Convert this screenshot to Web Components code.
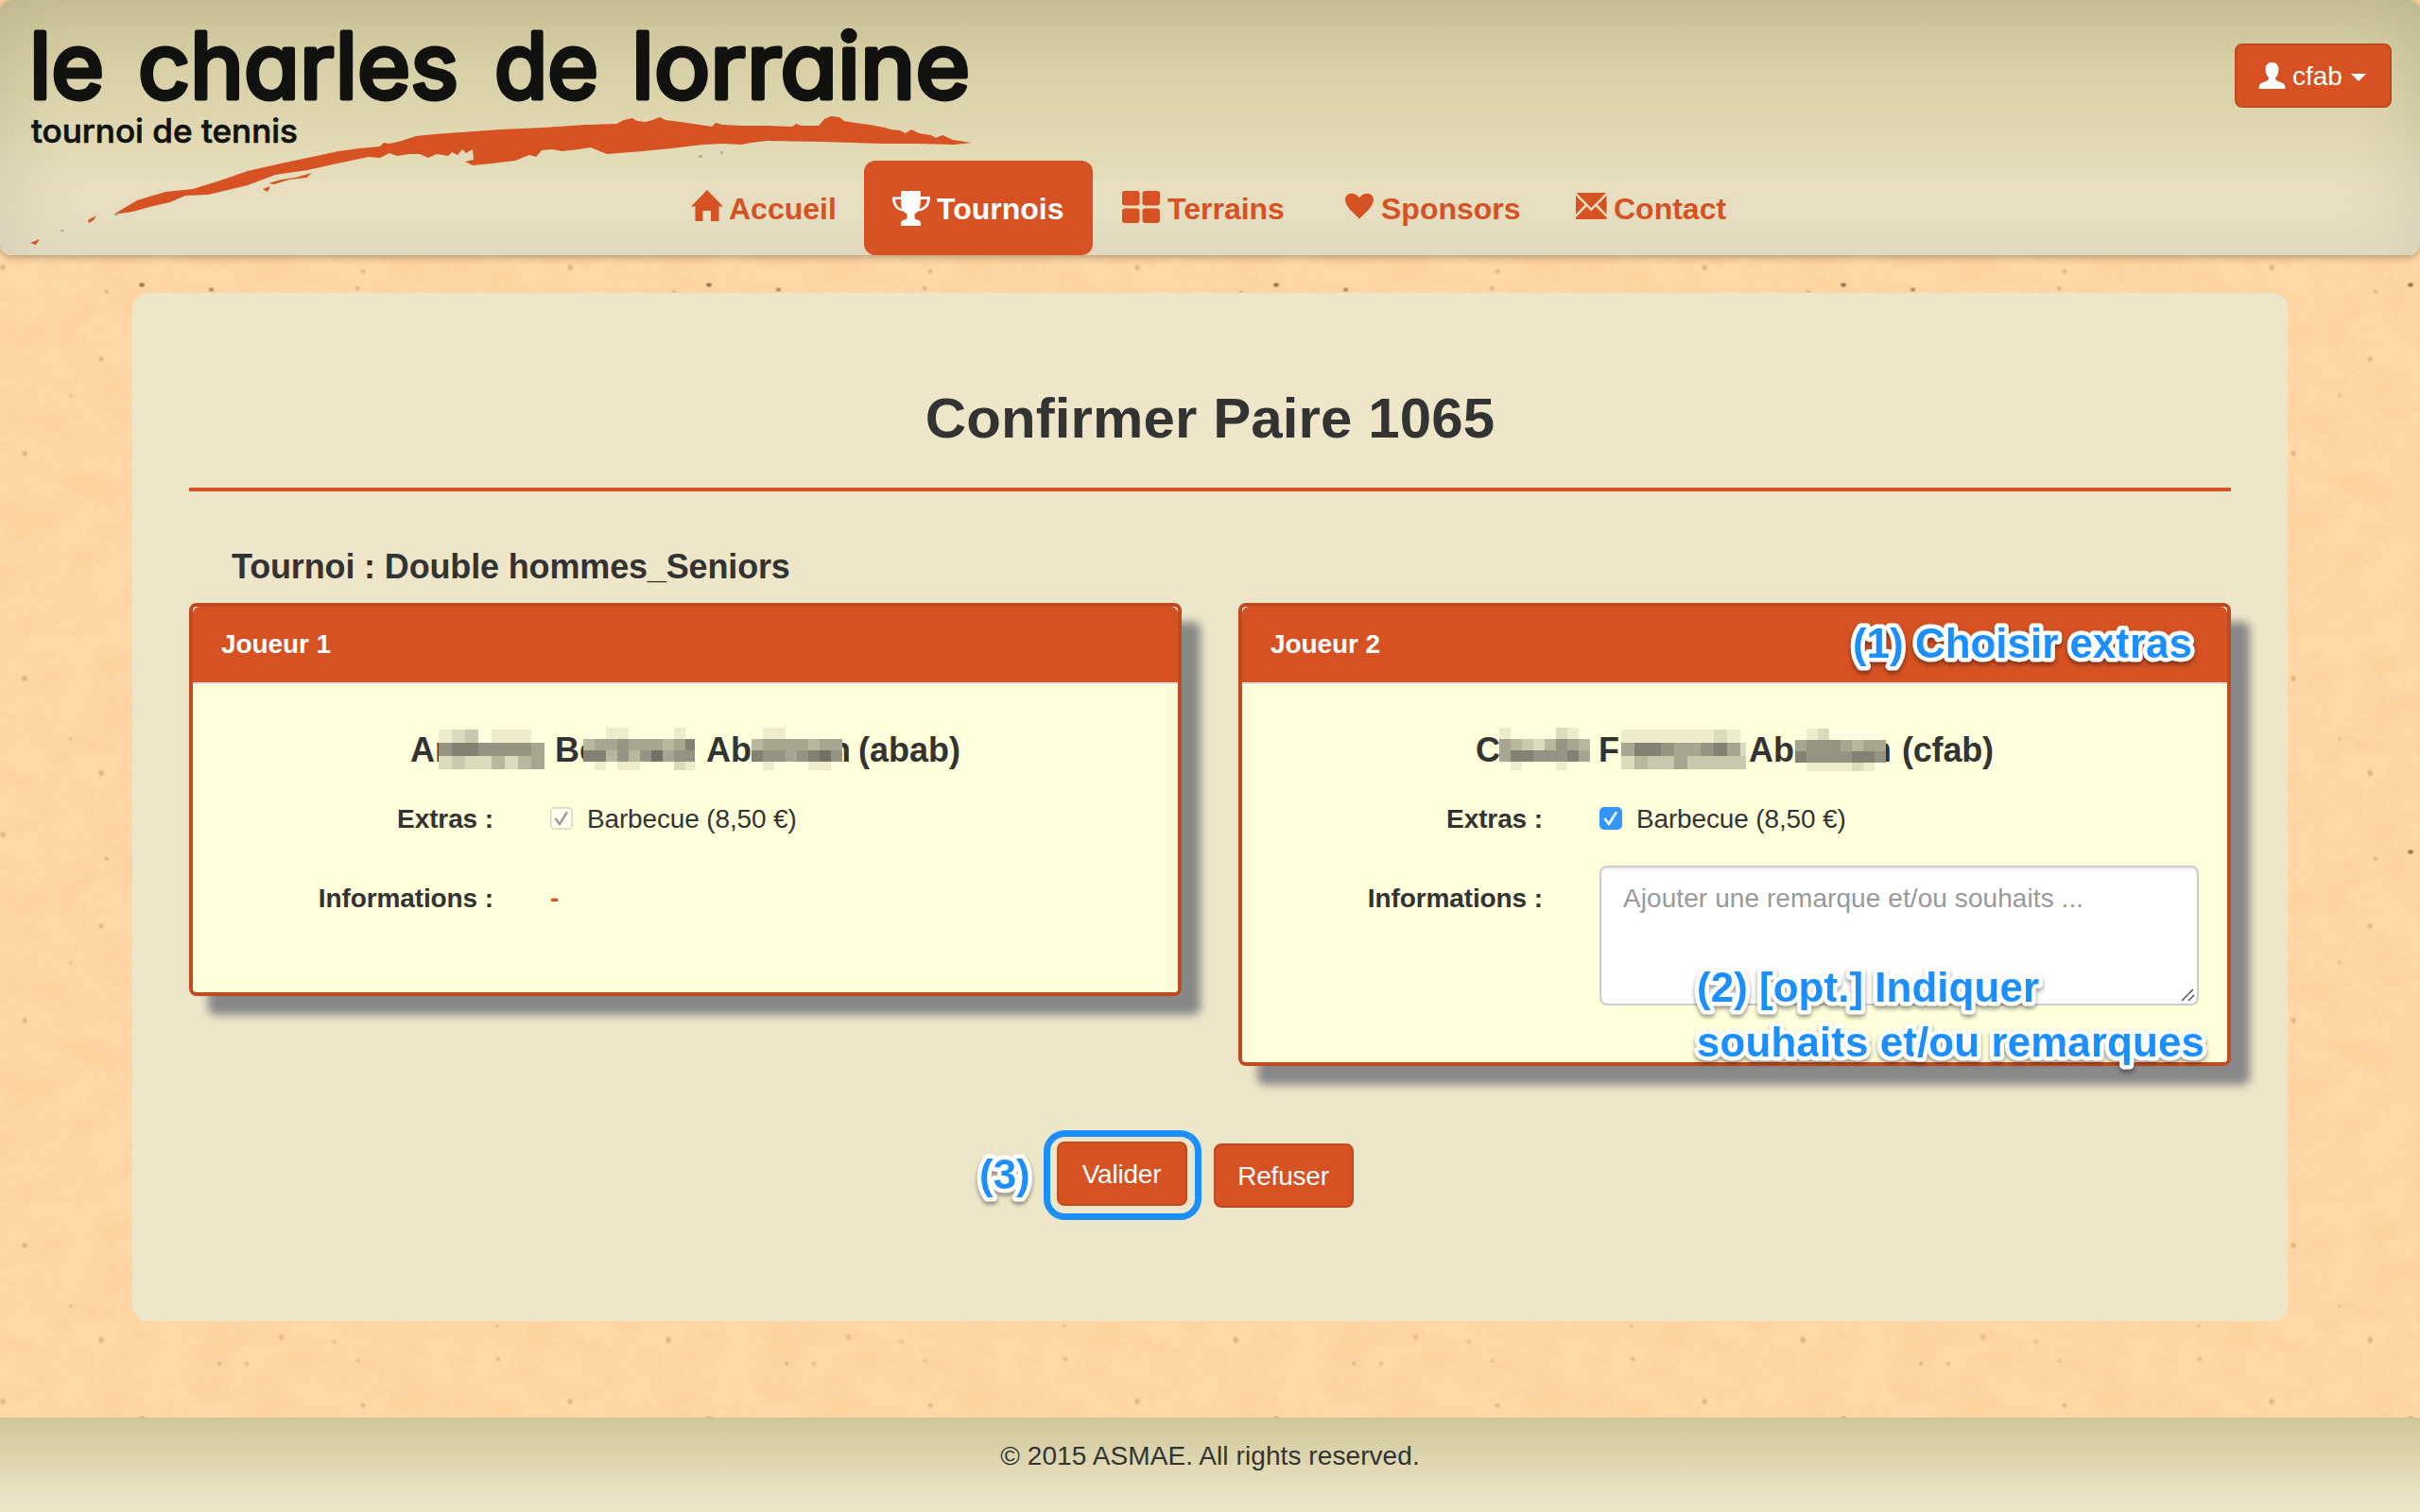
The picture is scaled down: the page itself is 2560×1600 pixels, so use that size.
<!DOCTYPE html>
<html lang="fr">
<head>
<meta charset="utf-8">
<title>Le Charles de Lorraine</title>
<style>
html,body{margin:0;padding:0}
body{width:2560px;height:1600px;overflow:hidden;background:#ffd7a4;color:#333;font:28px/40px "Liberation Sans",Arial,sans-serif}
</style>
</head>
<body>
<page-shell>
  <site-header slot="header"></site-header>
  <content-panel slot="main" heading="Confirmer Paire 1065" subheading="Tournoi : Double hommes_Seniors">
    <player-card slot="cards" label="Joueur 1" style="--body:326px">
      <player-name slot="name" style="padding-left:230px">
        <name-part style="width:30px">An</name-part>
        <pixel-mask cell="14" top="4" rows="12301110,67766665,23224245"></pixel-mask>
        <name-part style="width:30px;margin-left:11px">Be</name-part>
        <pixel-mask cell="12" top="2" rows="0011000010,4556555457,7746468566,0101100021" last="10"></pixel-mask>
        <name-part style="width:48px;margin-left:12px">Ab</name-part>
        <pixel-mask cell="12" top="2" rows="01100000,45555455,76656786,01000110"></pixel-mask>
        <name-part tail style="width:9px">n</name-part>
        <name-part style="margin-left:8px">(abab)</name-part>
      </player-name>
      <check-option slot="extras" disabled>Barbecue (8,50 €)</check-option>
      <b slot="info" style="color:#d65223;display:block;padding-top:15px">-</b>
    </player-card>
    <player-card slot="cards" label="Joueur 2" style="--body:400px">
      <player-name slot="name" style="padding-left:247px">
        <name-part style="width:25px">C</name-part>
        <pixel-mask cell="12" top="2" rows="10000210,54324654,57766675,01000100"></pixel-mask>
        <name-part style="width:24px;margin-left:9px">F</name-part>
        <pixel-mask cell="14" top="4" rows="1111111210,5776556752,2433533333" last="6"></pixel-mask>
        <name-part style="width:49px;margin-left:3px">Abe</name-part>
        <pixel-mask cell="12" top="3" rows="01200000,56665455,76666776,01111210"></pixel-mask>
        <name-part tail style="width:6px">n</name-part>
        <name-part style="margin-left:11px;letter-spacing:-.2px">(cfab)</name-part>
      </player-name>
      <check-option slot="extras">Barbecue (8,50 €)</check-option>
      <note-field slot="info">Ajouter une remarque et/ou souhaits ...</note-field>
    </player-card>
    <action-button slot="actions" style="width:138px">Valider</action-button>
    <action-button slot="actions" style="width:148px;margin-top:2px">Refuser</action-button>
  </content-panel>
  <site-footer slot="footer">© 2015 ASMAE. All rights reserved.</site-footer>
  <guide-notes slot="notes"></guide-notes>
</page-shell>

<script>
const define = (name, html, setup) => {
  const tpl = document.createElement('template');
  tpl.innerHTML = html;
  customElements.define(name, class extends HTMLElement {
    constructor() {
      super();
      this.attachShadow({mode: 'open'}).append(tpl.content.cloneNode(true));
    }
    connectedCallback() { if (setup) setup(this, this.shadowRoot); }
  });
};

/* Speckled paper background: one 600px tile, repeated. */
define('paper-texture', `
<style>:host{display:block;width:2560px;height:1600px}svg{display:block}</style>
<svg width="2560" height="1600">
  <defs>
    <filter id="grain" x="0" y="0" width="600" height="600" filterUnits="userSpaceOnUse" color-interpolation-filters="sRGB">
      <feTurbulence type="fractalNoise" baseFrequency="0.02 0.03" numOctaves="5" seed="4" stitchTiles="stitch"/>
      <feColorMatrix values="0 0 0 0 .95  0 0 0 0 .68  0 0 0 0 .44  .9 .5 0 0 -.5"/>
    </filter>
    <filter id="light" x="0" y="0" width="600" height="600" filterUnits="userSpaceOnUse" color-interpolation-filters="sRGB">
      <feTurbulence type="fractalNoise" baseFrequency="0.12 0.16" numOctaves="3" seed="9" stitchTiles="stitch"/>
      <feColorMatrix values="0 0 0 0 1  0 0 0 0 .9  0 0 0 0 .7  1.6 0 0 0 -.62"/>
    </filter>
    <filter id="soft"><feGaussianBlur stdDeviation=".8"/></filter>
    <pattern id="tile" width="600" height="600" patternUnits="userSpaceOnUse">
      <rect width="600" height="600" fill="#ffd7a4"/>
      <rect width="600" height="600" filter="url(#grain)" opacity=".27"/>
      <rect width="600" height="600" filter="url(#light)" opacity=".35"/>
      <g fill="#9a6238" filter="url(#soft)" opacity=".36">
        <ellipse cx="107" cy="218" rx="2.5" ry="3"/><ellipse cx="298" cy="215" rx="2.5" ry="3" fill="#c27a30"/>
        <circle cx="354" cy="220" r="1.6"/><circle cx="232" cy="243" r="2"/><circle cx="261" cy="243" r="2"/>
        <circle cx="379" cy="240" r="1.6"/><circle cx="527" cy="238" r="2"/><circle cx="526" cy="203" r="1.6"/>
        <circle cx="3" cy="283" r="2.4"/><circle cx="384" cy="287" r="2.3"/><circle cx="113" cy="309" r="2"/>
        <circle cx="378" cy="305" r="2.3"/><circle cx="107" cy="380" r="2.3"/><circle cx="26" cy="480" r="2.4"/>
        <circle cx="26" cy="118" r="2.6"/><circle cx="75" cy="418" r="1.6"/><circle cx="75" cy="182" r="1.6"/>
      </g>
      <ellipse cx="150" cy="301.500" rx="2.700" ry="2" fill="#5f3a1c" filter="url(#soft)" opacity=".85"/>
      <ellipse cx="223.500" cy="306.500" rx="2.700" ry="2" fill="#8a5a30" filter="url(#soft)" opacity=".75"/>
    </pattern>
  </defs>
  <rect width="2560" height="1600" fill="url(#tile)"/>
</svg>`);

define('page-shell', `
<style>
:host{display:grid;width:2560px;height:1600px;overflow:hidden}
paper-texture,.page{grid-area:1/1}
.page{display:flex;flex-direction:column;position:relative}
.main{display:flex;justify-content:center;padding:40px 140px 0;flex:1}
</style>
<paper-texture></paper-texture>
<div class="page">
  <slot name="header"></slot>
  <div class="main"><slot name="main"></slot></div>
  <slot name="footer"></slot>
  <slot name="notes"></slot>
</div>`);

define('brand-logo', `
<style>
:host{display:block}svg{display:block}
text{font-family:Inter,"Liberation Sans",sans-serif;font-feature-settings:"cv11";fill:#11120f}
.big{font-size:96px;font-weight:400;stroke:#11120f;stroke-width:5;stroke-linejoin:round}
.small{font-size:35px;font-weight:500;stroke:#11120f;stroke-width:.7}
</style>
<svg width="1060" height="268" viewBox="0 0 1060 268">
  <g class="big">
    <text x="31" y="103.500" textLength="79" lengthAdjust="spacingAndGlyphs">le</text>
    <text x="146" y="103.500" textLength="339" lengthAdjust="spacingAndGlyphs">charles</text>
    <text x="523" y="103.500" textLength="110" lengthAdjust="spacingAndGlyphs">de</text>
    <text x="668" y="103.500" textLength="358" lengthAdjust="spacingAndGlyphs">lorraine</text>
  </g>
  <text class="small" x="33" y="151" textLength="282" lengthAdjust="spacingAndGlyphs">tournoi de tennis</text>
  <path fill="#d65223" d="M120 227L145 212L175 203L204 200L233 191L262 181L297 173L330 166L358 160L380 157L402 155L406 151L412 152L425 149L440 144L460 142L487 140L530 137L575 135L620 132L652 131L660 127L669 125L674 128L683 129L690 127L698 124L704 127L720 129L747 133L753 134L757 130L765 132L785 133L811 133L838 134L842 131L848 133L866 133L872 126L879 123L888 124L893 128L905 130L920 132L936 135L942 137L952 138L958 141L964 137L972 141L985 143L990 146L997 143L1008 148L1028 151L1010 153L970 152L933 152L870 150L811 149L795 151L784 153L765 152L744 153L710 157L680 160L642 163L632 159L625 156L612 158L595 160L584 158L573 159L567 166L560 164L545 170L520 173L500 175L492 171L501 169L500 158L493 162L489 158L484 164L478 161L474 165L462 163L453 167L444 163L433 163L420 165L412 162L402 167L390 166L352 174L325 180L291 185L262 196L237 202L220 206L196 207L180 214L162 218L140 224Z" transform="translate(0 0)"/>
  <path fill="#d65223" d="M284 194L298 190L312 188L330 183L324 188L306 190L290 195ZM278 200L286 197L283 203ZM93 233L102 228L99 233L94 236ZM32 257L42 253L38 259Z"/>
  <path fill="#a6a09a" d="M739 164h4v3h-4zM762 160h3v3h-3zM64 243h4v2h-4zM120 227l6-2-2 4z" opacity=".7"/>
</svg>`);

const ICONS = {
  home: [33, '<path d="M17 1L34 18.500L29.500 18.500V34H21V23H12.500V34H4.500V18.500L0 18.500Z"/>'],
  cup: [40, '<path d="M11 2h17q2 0 2 2v4h10q0 14-12.500 15.500q-2.500 2-4 3v3.500q0 2 2.500 2.500q4 .5 4 4v2.500H9V36.500q0-3.500 4-4q2.500-.5 2.500-2.500V26.500q-2-1-4-3Q0 22 0 8.500h9V4q0-2 2-2ZM3 11q.500 8 7 10q-1-4-1-10ZM37 11h-7q0 6-1.500 10q7.500-2 8.500-10Z" fill-rule="evenodd"/>'],
  courts: [41, '<rect y="2" width="18.500" height="15.500" rx="3"/><rect x="21.500" y="2" width="18.500" height="15.500" rx="3"/><rect y="20.500" width="18.500" height="15.500" rx="3"/><rect x="21.500" y="20.500" width="18.500" height="15.500" rx="3"/>'],
  heart: [31, '<path d="M15 31.500C10 26 1 20 0 12C-.5 4 10 2 15 9.500C20 2 30.500 4 30 12C29 20 20 26 15 31.500Z"/>'],
  mail: [33, '<path d="M.5 4H32L16.300 20ZM0 7L9.500 16.500L0 27ZM32.500 7L23 16.500L32.500 27ZM0 32V30L11.500 18.500L16.300 23.500L21 18.500L32.500 30V32Z"/>']
};
define('nav-item', `
<style>
:host{display:flex;flex:none;align-items:center;gap:7px;height:100px;padding-left:30px;border-radius:12px;box-sizing:border-box;
 color:#d65223;font-weight:bold;font-size:32px;white-space:nowrap}
:host([active]){background:#d65223;color:#fff;margin-right:1px}
svg{display:block;fill:currentColor;overflow:visible}
span{padding-top:2px}
</style><svg height="40"></svg><span><slot></slot></span>`, (el, root) => {
  const [w, shape] = ICONS[el.getAttribute('icon')];
  const svg = root.querySelector('svg');
  svg.setAttribute('width', w);
  svg.innerHTML = shape;
});

define('user-menu', `
<style>
:host{display:flex;align-items:center;box-sizing:border-box;width:166px;height:68px;border:2px solid #bf4a1f;border-radius:8px;
 background:#d65223;color:#fff;padding-left:23px}
svg{display:block;fill:#fff}span{margin:1px 9px 0 7px}
</style>
<svg width="29" height="28"><path d="M14.500 0C19 0 21.500 3 21.500 7.500C21.500 11 20 14.500 18 16.500Q18 19 20 19.500L26 22Q28.500 23.500 28.500 28H.5Q.5 23.500 3 22L9 19.500Q11 19 11 16.500C9 14.500 7.500 11 7.500 7.500C7.500 3 10 0 14.500 0Z"/></svg>
<span>cfab</span>
<svg width="16" height="8" style="margin-top:3px"><path d="M0 0H16L8 8Z"/></svg>`);

define('site-header', `
<style>
:host{display:grid;height:270px;border-radius:12px;
 background:linear-gradient(#cfc79a,#e2dbb6 60%,#e9e0c3 80%,#ebe5c9);
 box-shadow:0 2px 8px rgba(0,0,0,.3),inset 0 0 80px rgba(0,0,0,.1)}
brand-logo,nav,user-menu{grid-area:1/1}
nav{display:flex;justify-self:center;align-self:end}
user-menu{justify-self:end;margin:46px 30px 0 0}
</style>
<brand-logo></brand-logo>
<nav>
  <nav-item icon="home" style="width:213px">Accueil</nav-item>
  <nav-item icon="cup" active style="width:242px">Tournois</nav-item>
  <nav-item icon="courts" style="width:236px">Terrains</nav-item>
  <nav-item icon="heart" style="width:244px">Sponsors</nav-item>
  <nav-item icon="mail" style="width:222px">Contact</nav-item>
</nav>
<user-menu></user-menu>`);

define('content-panel', `
<style>
:host{display:flex;flex-direction:column;box-sizing:border-box;width:2280px;height:1088px;padding:100px 60px 0;border-radius:16px;background:#eee6c9}
h1{margin:0;font-size:60px;line-height:66px;text-align:center;letter-spacing:.1px}
hr{width:100%;height:4px;border:0;background:#d65223;margin:40px 0 60px}
h2{margin:0 0 18px;padding-left:45px;font-size:36px;line-height:40px;letter-spacing:-.15px}
.cards{display:flex;gap:60px;align-items:flex-start;height:490px}
.actions{display:flex;gap:28px;align-items:flex-start;justify-content:center;padding-right:10px;margin-top:80px}
</style>
<h1></h1><hr><h2></h2>
<div class="cards"><slot name="cards"></slot></div>
<div class="actions"><slot name="actions"></slot></div>`, (el, root) => {
  root.querySelector('h1').textContent = el.getAttribute('heading');
  root.querySelector('h2').textContent = el.getAttribute('subheading');
});

define('player-card', `
<style>
:host{display:block;box-sizing:border-box;width:1050px;border:4px solid #c14a1f;border-radius:8px;background:#fff;box-shadow:20px 20px 10px #888}
header{height:80px;box-sizing:border-box;padding:20px 30px 0;border-radius:7px 7px 0 0;background:#d65223;color:#fff;font-weight:bold;letter-spacing:-.1px}
.body{border-top:2px solid #ddd;height:var(--body);background:#ffffdb;border-radius:0 0 4px 4px;display:flex;flex-direction:column}
.row{display:grid;grid-template-columns:318px 1fr;column-gap:60px;padding-right:30px}
.row b{text-align:right;letter-spacing:-.1px}
.extras{margin-top:27px;height:70px}
.extras b{padding-top:1px}
.info b{padding-top:15px}
</style>
<header></header>
<div class="body">
  <slot name="name"></slot>
  <div class="row extras"><b>Extras :</b><slot name="extras"></slot></div>
  <div class="row info"><b>Informations :</b><slot name="info"></slot></div>
</div>`, (el, root) => { root.querySelector('header').textContent = el.getAttribute('label'); });

define('player-name', `<style>:host{display:flex;height:51px;margin-top:44px;font-size:36px;font-weight:bold}</style><slot></slot>`);
define('name-part', `
<style>
:host{display:flex;box-sizing:border-box;height:50px;padding-top:6px;flex:none}
:host([tail]){justify-content:flex-end}
</style><slot></slot>`);

/* Mosaic that covers part of a name; each digit is the darkness of one cell. */
define('pixel-mask', `<style>:host{display:block;flex:none;position:relative;z-index:1}svg{display:block}</style><svg height="50" shape-rendering="crispEdges"></svg>`, (el, root) => {
  const cell = +el.getAttribute('cell'), top = +el.getAttribute('top');
  const rows = el.getAttribute('rows').split(',');
  const last = +(el.getAttribute('last') || cell);
  const svg = root.querySelector('svg');
  svg.setAttribute('width', (rows[0].length - 1) * cell + last);
  const mix = (a, b, t) => Math.round(a + (b - a) * t);
  svg.innerHTML = rows.map((r, j) => [...r].map((d, i) => {
    const t = d / 8.800;
    const c = d === '0' ? '#ffffe2' : `rgb(${mix(255, 98, t)},${mix(255, 98, t)},${mix(219, 88, t)})`;
    const h = j === 3 ? 9 : cell;
    return `<rect x="${i * cell}" y="${top + j * cell}" width="${i === r.length - 1 ? last : cell}" height="${h}" fill="${c}"/>`;
  }).join('')).join('');
});

define('check-option', `
<style>
:host{display:flex;align-items:center;gap:15px;letter-spacing:-.15px;height:40px}
i{display:block;width:24px;height:24px;border-radius:5px;background:#3296fd}
span{padding-top:1px}
svg{display:block}path{fill:none;stroke:#fff;stroke-width:2.6;stroke-linecap:round;stroke-linejoin:round}
:host([disabled]) i{background:#fffff4;box-shadow:inset 0 0 0 1.500px #d9d9ba,inset 0 2px 2px rgba(0,0,0,.08)}
:host([disabled]) path{stroke:#a2a28c}
</style>
<i><svg width="24" height="24"><path d="M6 12.800L10 18L17.500 6"/></svg></i><span><slot></slot></span>`);

define('note-field', `
<style>
:host{display:flex;box-sizing:border-box;width:634px;height:148px;border:2px solid #ccc;border-radius:8px;background:#fff;
 box-shadow:inset 0 2px 2px rgba(0,0,0,.075);padding:13px 0 0 23px;color:#999;letter-spacing:.08px}
span{flex:1}
svg{align-self:flex-end;display:block}
</style>
<span><slot></slot></span>
<svg width="18" height="18"><path d="M2 15L14 3M9 15L15 9" stroke="#555" stroke-width="1.500" fill="none"/></svg>`);

define('action-button', `
<style>
:host{display:flex;align-items:center;justify-content:center;box-sizing:border-box;height:68px;border:2px solid #c14a1f;border-radius:8px;background:#d65223;color:#fff;letter-spacing:-.2px;padding:1px 1px 0 0}
</style><slot></slot>`);

define('site-footer', `
<style>
:host{display:flex;justify-content:center;box-sizing:border-box;height:100px;padding-top:21px;letter-spacing:.08px;
 background:linear-gradient(#cfc79a,#e2dbb6 60%,#e9e0c3 80%,#ebe5c9)}
</style><slot></slot>`);

/* Numbered guide annotations floating above the form. */
define('guide-notes', `
<style>
:host{position:absolute;left:0;top:0;width:2560px;height:1600px;pointer-events:none}
svg{display:block}
text{font:bold 44px "Liberation Sans",Arial,sans-serif;fill:#1b8fff;stroke:#fff;stroke-width:9px;stroke-linejoin:round;paint-order:stroke}
g{filter:drop-shadow(0 3px 2px rgba(0,0,0,.4))}
</style>
<svg width="2560" height="1600">
  <g><text x="1960" y="696" textLength="359">(1) Choisir extras</text></g>
  <g><text x="1795" y="1060" textLength="362">(2) [opt.] Indiquer</text><text x="1795" y="1118" textLength="537">souhaits et/ou remarques</text></g>
  <g><text x="1036" y="1258">(3)</text></g>
  <rect x="1107.500" y="1199.500" width="160" height="88" rx="19" fill="none" stroke="#1b8fff" stroke-width="7"/>
</svg>`);
</script>
</body>
</html>
